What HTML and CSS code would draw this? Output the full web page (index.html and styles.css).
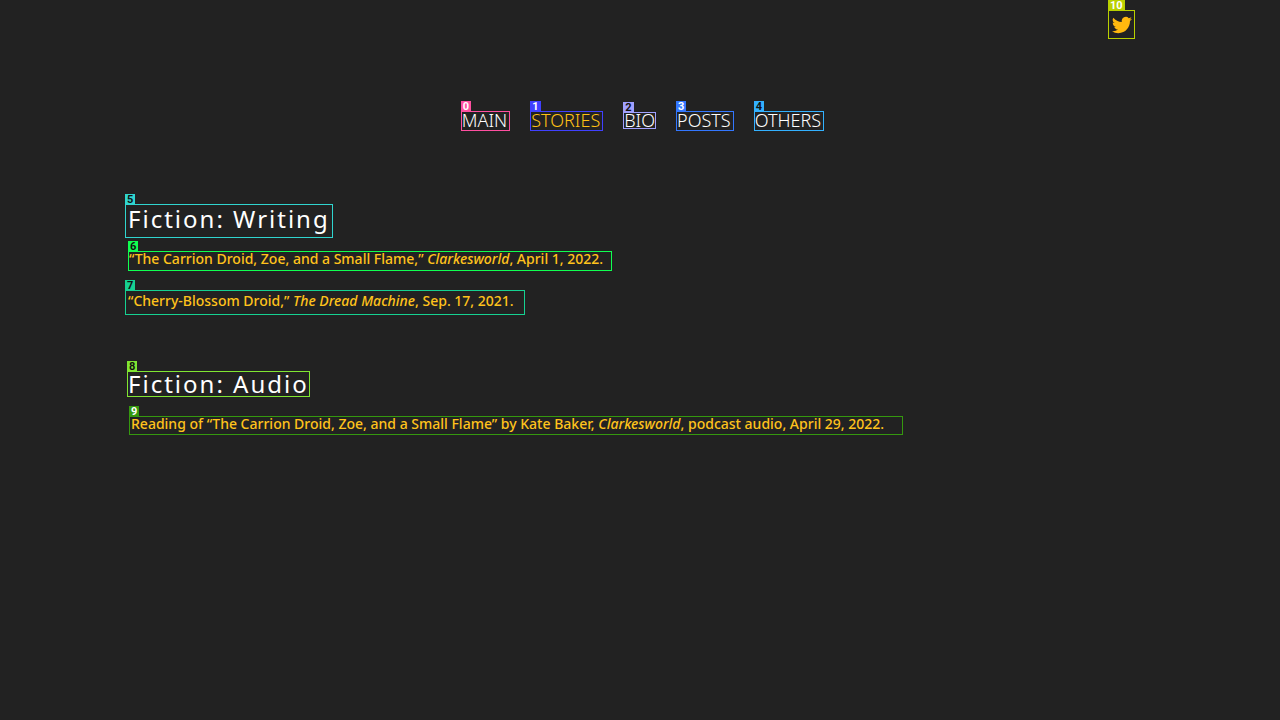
FILE: index.html
```html
<!DOCTYPE html>
<html lang="en">
<head>
<meta charset="utf-8">
<meta name="viewport" content="width=device-width, initial-scale=1">
<title>Stories</title>
<link rel="stylesheet" href="styles.css">
</head>
<body>
<header class="top">
  <a class="mark lime social" href="#" aria-label="Twitter"><span class="tag">10</span><svg class="bird" viewBox="0 0 24 24" aria-hidden="true"><path d="M23.95 4.57a10 10 0 0 1-2.82.77 4.96 4.96 0 0 0 2.16-2.72c-.95.55-2 .95-3.13 1.18a4.92 4.92 0 0 0-8.38 4.48C7.69 8.1 4.07 6.13 1.64 3.16a4.93 4.93 0 0 0 1.52 6.57 4.9 4.9 0 0 1-2.23-.61v.06a4.92 4.92 0 0 0 3.95 4.83 5 5 0 0 1-2.21.08 4.94 4.94 0 0 0 4.6 3.42A9.87 9.87 0 0 1 0 19.54a13.99 13.99 0 0 0 7.55 2.21c9.05 0 14-7.5 14-13.98 0-.21 0-.42-.02-.63a9.94 9.94 0 0 0 2.46-2.55z"/></svg></a>
</header>
<nav class="menu">
  <a class="mark pink" href="#"><span class="tag">0</span>MAIN</a>
  <a class="mark indigo current" href="#" aria-current="page"><span class="tag">1</span>STORIES</a>
  <a class="mark lavender dark short" href="#"><span class="tag">2</span>BIO</a>
  <a class="mark blue" href="#"><span class="tag">3</span>POSTS</a>
  <a class="mark sky dark" href="#"><span class="tag">4</span>OTHERS</a>
</nav>
<main class="content">
  <section class="group">
    <h2 class="mark cyan dark roomy"><span class="tag">5</span>Fiction: Writing</h2>
    <a class="mark green dark story inset" href="#"><span class="tag">6</span>“The Carrion Droid, Zoe, and a Small Flame,” <i>Clarkesworld</i>, April 1, 2022.</a>
    <a class="mark teal dark story roomy" href="#"><span class="tag">7</span>“Cherry-Blossom Droid,” <i>The Dread Machine</i>, Sep. 17, 2021.</a>
  </section>
  <section class="group">
    <h2 class="mark leaf dark inset"><span class="tag">8</span>Fiction: Audio</h2>
    <a class="mark forest story inset audio" href="#"><span class="tag">9</span>Reading of “The Carrion Droid, Zoe, and a Small Flame” by Kate Baker, <i>Clarkesworld</i>, podcast audio, April 29, 2022.</a>
  </section>
</main>
</body>
</html>
```
FILE: styles.css
```css
* { box-sizing: border-box; }
body {
  margin: 0;
  min-height: 100vh;
  background: #222;
  color: #fff;
  font-family: "Noto Sans", "Open Sans", sans-serif;
}
a { color: inherit; text-decoration: none; }

/* Outlined item with a numbered tag on its top-left corner */
.mark { position: relative; border: 1px solid var(--c); }
.tag {
  position: absolute;
  left: -1px;
  bottom: 100%;
  height: 11px;
  padding: 0 2px;
  background: var(--c);
  color: #fff;
  font: 700 11px/12px Roboto, sans-serif;
  letter-spacing: 0;
}
.dark > .tag { color: #111; }
.pink { --c: #ff4fa0; }
.indigo { --c: #4040ff; }
.lavender { --c: #a0a0ff; }
.blue { --c: #3377ff; }
.sky { --c: #33b1ff; }
.cyan { --c: #30d5cf; }
.green { --c: #10ff50; }
.teal { --c: #16d191; }
.leaf { --c: #80e632; }
.forest { --c: #35980f; }
.lime { --c: #b9d000; }

.top { display: flex; justify-content: flex-end; padding: 10px 145px 0; }
.social { display: flex; align-items: center; justify-content: center; width: 27px; height: 29px; }
.social .tag { padding: 0 2px; }
.bird { width: 20px; height: 20px; fill: #ffb90f; }

.menu { display: flex; justify-content: center; align-items: flex-start; gap: 20px; margin: 72px 0 73px 5px; }
.menu .mark { height: 20px; padding-right: 2px; font-size: 18px; line-height: 16px; font-weight: 300; }
.menu .short { height: 17px; line-height: 14px; padding-right: 0; margin-top: 1px; }
.menu .current { color: #ffc115; }

.content { padding: 0 125px; }
.group { display: flex; flex-direction: column; align-items: flex-start; margin-bottom: 56px; }
h2 { margin: 0; font-size: 24px; line-height: 24px; font-weight: 400; letter-spacing: 2px; }
h2.roomy { padding: 2px 2px 6px; margin-bottom: 13px; }
h2.inset { margin-bottom: 19px; margin-left: 2px; }
.inset { margin-left: 3px; }
.story { color: #ffc31c; font-size: 14px; line-height: 14px; padding: 0 8px 4px 0; font-weight: 500; margin-bottom: 19px; }
.story.roomy { padding: 3px 10px 6px 2px; margin-bottom: 0; }
.story.audio { padding: 0 18px 3px 1px; margin-left: 4px; }
```
